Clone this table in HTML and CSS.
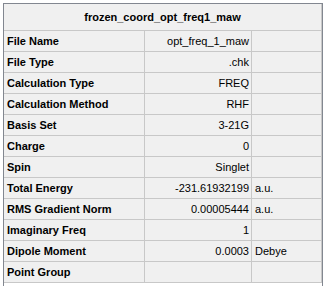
FILE: index.html
```html
<!DOCTYPE html>
<html>
<head>
<meta charset="utf-8">
<link rel="stylesheet" href="styles.css">
</head>
<body>
<div class="frame">
  <div class="grid">
    <div class="head">frozen_coord_opt_freq1_maw</div>

    <div class="label">File Name</div><div class="value">opt_freq_1_maw</div><div class="unit"></div>
    <div class="label">File Type</div><div class="value">.chk</div><div class="unit"></div>
    <div class="label">Calculation Type</div><div class="value">FREQ</div><div class="unit"></div>
    <div class="label">Calculation Method</div><div class="value">RHF</div><div class="unit"></div>
    <div class="label">Basis Set</div><div class="value">3-21G</div><div class="unit"></div>
    <div class="label">Charge</div><div class="value">0</div><div class="unit"></div>
    <div class="label">Spin</div><div class="value">Singlet</div><div class="unit"></div>
    <div class="label">Total Energy</div><div class="value">-231.61932199</div><div class="unit">a.u.</div>
    <div class="label">RMS Gradient Norm</div><div class="value">0.00005444</div><div class="unit">a.u.</div>
    <div class="label">Imaginary Freq</div><div class="value">1</div><div class="unit"></div>
    <div class="label">Dipole Moment</div><div class="value">0.0003</div><div class="unit">Debye</div>
    <div class="label">Point Group</div><div class="value"></div><div class="unit"></div>
  </div>
</div>
</body>
</html>
```

FILE: styles.css
```css
html, body {
  margin: 0;
  padding: 0;
  background: #ffffff;
  overflow: hidden;
}

body {
  font-family: "Liberation Sans", Arial, sans-serif;
  font-size: 11px;
  color: #000000;
}

.frame {
  margin: 3px 0 0 3px;
  width: 318px;
  height: 282px;
  border: 1px solid #828790;
  border-bottom: none;
  background: #ffffff;
}

.grid {
  display: grid;
  grid-template-columns: 140px 106px 69px;
  grid-template-rows: 26px;
  grid-auto-rows: 20px;
  gap: 1px;
  padding: 0 1px 1px 0;
  background: #c8c8c8;
  width: 317px;
}

.grid > div {
  background: #f0f0f0;
  display: flex;
  align-items: center;
  white-space: nowrap;
  overflow: hidden;
}

.head {
  grid-column: 1 / 4;
  justify-content: center;
  font-weight: bold;
}

.label {
  font-weight: bold;
  padding-left: 3px;
}

.value {
  justify-content: flex-end;
  padding-right: 2px;
}

.unit {
  padding-left: 3px;
}
```
